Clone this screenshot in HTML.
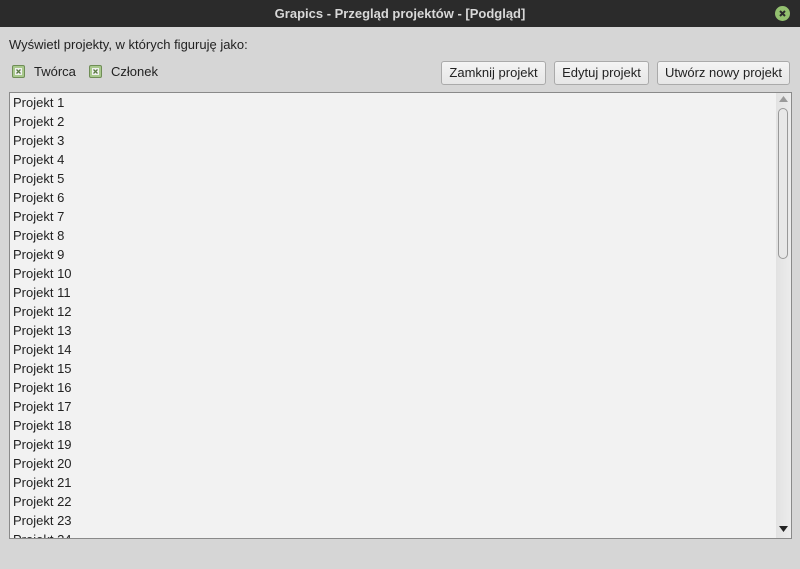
<!DOCTYPE html>
<html><head><meta charset="utf-8"><style>
*{margin:0;padding:0;box-sizing:border-box}
body{width:800px;height:569px;background:#d6d6d6;font-family:"Liberation Sans","DejaVu Sans",sans-serif;font-size:13px;color:#222;position:relative;overflow:hidden}
.tb{position:absolute;left:0;top:0;width:800px;height:27px;background:#2b2b2b;color:#d8d8d8;font-weight:bold;font-size:13px;text-align:center;line-height:28px}
.close{position:absolute;left:775px;top:6px;width:15px;height:15px;border-radius:50%;background:#93c06f}
.t{position:absolute;white-space:nowrap}
.cb{position:absolute;width:13px;height:13px;border:1px solid #6f8d56;background:#a9c98d;border-radius:2px}
.cb svg{position:absolute;left:2px;top:2px}
.btn{position:absolute;top:61px;height:24px;border:1px solid #aaa;border-radius:3px;background:linear-gradient(#f4f4f4,#e6e6e6);text-align:center;line-height:22px;font-size:13px}
.list{position:absolute;left:9px;top:92px;width:783px;height:447px;border:1px solid #8a8a8a;background:#f2f2f2;overflow:hidden}
.row{position:absolute;left:3px;height:19px;line-height:19px}
.sb{position:absolute;right:0;top:0;width:15px;height:445px;background:linear-gradient(90deg,#e2e2e2,#ececec)}
.thumb{position:absolute;left:2px;top:15px;width:10px;height:151px;border:1px solid #999;border-radius:5px;background:#e8e8e8}
</style></head><body>
<div class="tb">Grapics - Przegląd projektów - [Podgląd]</div>
<div class="close"><svg width="15" height="15"><path d="M5 5L10 10M10 5L5 10" stroke="#2b2b2b" stroke-width="2"/></svg></div>
<div class="t" style="left:9px;top:37px">Wyświetl projekty, w których figuruję jako:</div>
<div class="cb" style="left:12px;top:65px"><svg width="7" height="7"><rect width="7" height="7" fill="#f0f0f0"/><path d="M1.5 1.5L5.5 5.5M5.5 1.5L1.5 5.5" stroke="#5a7a43" stroke-width="1.3"/></svg></div>
<div class="t" style="left:34px;top:64px">Twórca</div>
<div class="cb" style="left:89px;top:65px"><svg width="7" height="7"><rect width="7" height="7" fill="#f0f0f0"/><path d="M1.5 1.5L5.5 5.5M5.5 1.5L1.5 5.5" stroke="#5a7a43" stroke-width="1.3"/></svg></div>
<div class="t" style="left:111px;top:64px">Członek</div>
<div class="btn" style="left:441px;width:105px">Zamknij projekt</div>
<div class="btn" style="left:554px;width:95px">Edytuj projekt</div>
<div class="btn" style="left:657px;width:133px">Utwórz nowy projekt</div>
<div class="list">
<div class="row" style="top:0px">Projekt 1</div>
<div class="row" style="top:19px">Projekt 2</div>
<div class="row" style="top:38px">Projekt 3</div>
<div class="row" style="top:57px">Projekt 4</div>
<div class="row" style="top:76px">Projekt 5</div>
<div class="row" style="top:95px">Projekt 6</div>
<div class="row" style="top:114px">Projekt 7</div>
<div class="row" style="top:133px">Projekt 8</div>
<div class="row" style="top:152px">Projekt 9</div>
<div class="row" style="top:171px">Projekt 10</div>
<div class="row" style="top:190px">Projekt 11</div>
<div class="row" style="top:209px">Projekt 12</div>
<div class="row" style="top:228px">Projekt 13</div>
<div class="row" style="top:247px">Projekt 14</div>
<div class="row" style="top:266px">Projekt 15</div>
<div class="row" style="top:285px">Projekt 16</div>
<div class="row" style="top:304px">Projekt 17</div>
<div class="row" style="top:323px">Projekt 18</div>
<div class="row" style="top:342px">Projekt 19</div>
<div class="row" style="top:361px">Projekt 20</div>
<div class="row" style="top:380px">Projekt 21</div>
<div class="row" style="top:399px">Projekt 22</div>
<div class="row" style="top:418px">Projekt 23</div>
<div class="row" style="top:437px">Projekt 24</div>
<div class="sb">
<svg style="position:absolute;left:3px;top:3px" width="9" height="6"><path d="M4.5 0L9 6H0z" fill="#9a9a9a"/></svg>
<div class="thumb"></div>
<svg style="position:absolute;left:3px;top:433px" width="9" height="6"><path d="M0 0H9L4.5 6z" fill="#222"/></svg>
</div>
</div>
</body></html>
